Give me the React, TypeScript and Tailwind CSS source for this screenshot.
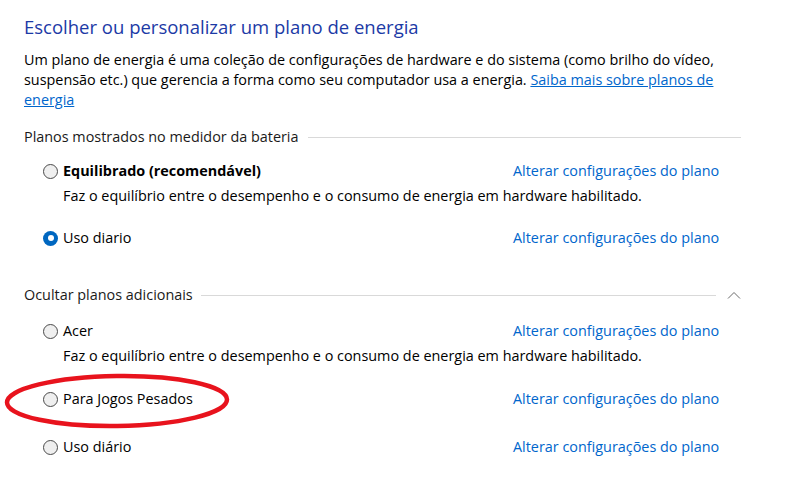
import React from 'react'

function Radio({ checked }: { checked?: boolean }) {
  if (checked) {
    return (
      <span className="flex h-[15px] w-[15px] shrink-0 items-center justify-center rounded-full bg-[#0067c0]">
        <span className="h-[6px] w-[6px] rounded-full bg-white" />
      </span>
    )
  }
  return <span className="h-[15px] w-[15px] shrink-0 rounded-full border border-[#4a4a4a] bg-[#efefef]" />
}

function Plan({ name, bold, checked, desc, className }: { name: string; bold?: boolean; checked?: boolean; desc?: string; className?: string }) {
  return (
    <div className={className}>
      <div className="grid grid-cols-[470px_1fr] items-center">
        <div className="flex items-center gap-[5px]">
          <Radio checked={checked} />
          <span className={bold ? 'font-bold text-black' : 'text-black'}>{name}</span>
        </div>
        <a className="text-[#0066cc] whitespace-nowrap">Alterar configurações do plano</a>
      </div>
      {desc && <p className="mt-[5px] pl-[20px] text-black">{desc}</p>}
    </div>
  )
}

export default function App() {
  return (
    <div className="relative h-[488px] w-[796px] overflow-hidden bg-white pl-[24px] pr-[55px] pt-[13px] font-['Segoe_UI','Open_Sans',sans-serif] text-[14.4px] leading-[20px]">
      <h1 className="text-[18.5px] leading-[28px] text-[#1c3aa6]">Escolher ou personalizar um plano de energia</h1>

      <p className="mt-[9px] whitespace-nowrap text-black">
        Um plano de energia é uma coleção de configurações de hardware e do sistema (como brilho do vídeo,
        <br />
        suspensão etc.) que gerencia a forma como seu computador usa a energia.{' '}
        <a className="text-[#0066cc] underline">Saiba mais sobre planos de</a>
        <br />
        <a className="text-[#0066cc] underline">energia</a>
      </p>

      {/* Planos mostrados */}
      <div className="mt-[17px] flex items-center text-[#1a1a1a]">
        <span>Planos mostrados no medidor da bateria</span>
        <span className="ml-[10px] h-px flex-1 bg-[#d9d9d9]" />
      </div>
      <div className="pl-[19px]">
        <Plan className="mt-[14px]" name="Equilibrado (recomendável)" bold desc="Faz o equilíbrio entre o desempenho e o consumo de energia em hardware habilitado." />
        <Plan className="mt-[22px]" name="Uso diario" checked />
      </div>

      {/* Ocultar planos */}
      <div className="mt-[37px] flex items-center text-[#1a1a1a]">
        <span>Ocultar planos adicionais</span>
        <span className="ml-[8px] h-px flex-1 bg-[#d9d9d9]" />
        <svg className="ml-[11px]" width="14" height="8" viewBox="0 0 14 8" fill="none">
          <path d="M1 7.5 L7 1.5 L13 7.5" stroke="#6b6b6b" strokeWidth="1" />
        </svg>
      </div>
      <div className="pl-[19px]">
        <Plan className="mt-[16px]" name="Acer" desc="Faz o equilíbrio entre o desempenho e o consumo de energia em hardware habilitado." />
        <Plan className="mt-[23px]" name="Para Jogos Pesados" />
        <Plan className="mt-[28px]" name="Uso diário" />
      </div>

      {/* anotação */}
      <svg className="absolute left-0 top-0 pointer-events-none" width="796" height="488">
        <ellipse cx="117" cy="401" rx="110" ry="25" fill="none" stroke="#e8131d" strokeWidth="4.5" transform="rotate(-0.8 117 401)" />
      </svg>
    </div>
  )
}
